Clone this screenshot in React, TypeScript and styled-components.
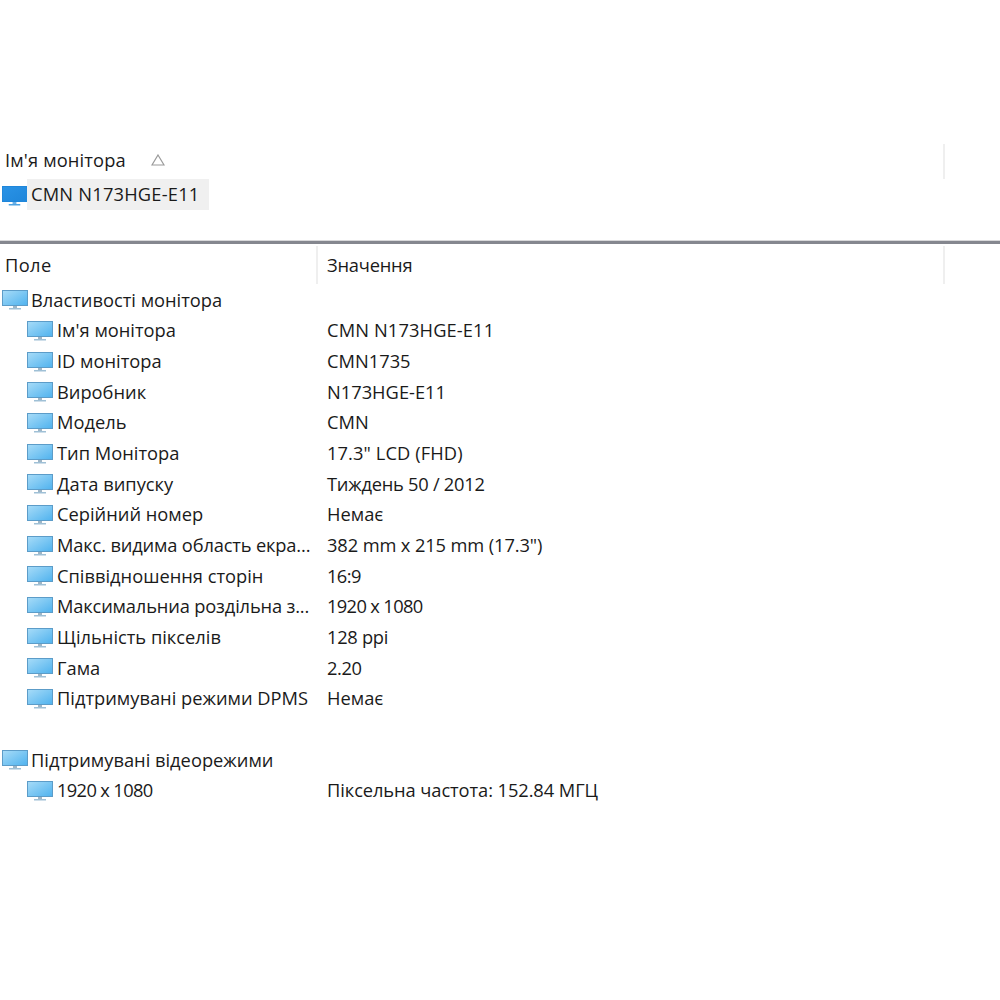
import React from "react";
import styled, { createGlobalStyle } from "styled-components";

const Global = createGlobalStyle`
  html, body { margin: 0; padding: 0; background: #fff; }
  body { font-family: "Open Sans", "Noto Sans", "Liberation Sans", sans-serif; color: #1a1a1a; font-size: 18.3px; }
`;

const Page = styled.div`
  width: 1000px;
  height: 1000px;
  box-sizing: border-box;
  padding-top: 144px;
  overflow: hidden;
`;

const HeaderBar = styled.div`
  display: grid;
  grid-template-columns: 945px 1fr;
  height: 35px;
`;

const HeaderCell = styled.div`
  display: flex;
  align-items: center;
  gap: 25px;
  padding-left: 5px;
  border-right: 2px solid #efefef;
  line-height: 30px;
  height: 35px;
`;

const HeaderTitle = styled.span`
  letter-spacing: 0.15px;
  margin-top: -4px;
`;

const SortArrow = styled.svg`
  margin-top: -4px;
`;

const TopRow = styled.div`
  display: flex;
  align-items: center;
  height: 31px;
  padding-left: 2px;
`;

const Selected = styled.div`
  background: #f0f0f0;
  height: 31px;
  line-height: 30px;
  letter-spacing: 0.2px;
  padding: 0 10px 0 4px;
`;

const Splitter = styled.div`
  margin-top: 30px;
  height: 4px;
  background: #85878f;
  border-top: 1px solid #d8d8da;
  box-sizing: border-box;
`;

const ColumnHeader = styled.div`
  display: grid;
  grid-template-columns: 318px 627px;
  height: 38px;
  margin-top: 2px;
  align-items: center;
`;

const ColumnLabel = styled.div<{ $first?: boolean }>`
  height: 38px;
  line-height: 37px;
  box-sizing: border-box;
  padding-left: ${(p) => (p.$first ? "5px" : "9px")};
  letter-spacing: ${(p) => (p.$first ? "0.4px" : "-0.2px")};
  border-right: 2px solid #efefef;
`;

const List = styled.div`
  display: grid;
  grid-auto-rows: 30.67px;
`;

const Row = styled.div`
  display: grid;
  grid-template-columns: 327px 1fr;
  align-items: center;
  white-space: nowrap;
`;

const Name = styled.div<{ $child?: boolean }>`
  display: flex;
  align-items: center;
  gap: ${(p) => (p.$child ? "4px" : "3px")};
  padding-left: ${(p) => (p.$child ? "27px" : "2px")};
`;

const Label = styled.span<{ $track?: number }>`
  letter-spacing: ${(p) => p.$track ?? 0}px;
`;

const MonitorSvg = styled.svg<{ $dark?: boolean }>`
  flex: none;
  margin-top: ${(p) => (p.$dark ? "3px" : "2px")};
`;

const Monitor = ({ dark }: { dark?: boolean }) => (
  <MonitorSvg $dark={dark} width={dark ? 25 : 26} height="20" viewBox="0 0 26 20" preserveAspectRatio="none">
    <defs>
      <linearGradient id={dark ? "sd" : "sl"} x1="0" y1="0" x2="1" y2="1">
        <stop offset="0" stopColor={dark ? "#2a93e6" : "#a8dcf8"} />
        <stop offset="1" stopColor={dark ? "#1f86da" : "#4fb2ee"} />
      </linearGradient>
    </defs>
    <rect x="0.5" y="0.5" width="25" height="15" fill={`url(#${dark ? "sd" : "sl"})`} stroke={dark ? "#1f86da" : "#5c9cc8"} />
    <rect x="11" y="16" width="4" height="2" fill={dark ? "#6ab0e6" : "#9fb6c6"} />
    <rect x="7" y="18" width="12" height="1.5" fill={dark ? "#4ea3e2" : "#9fc0d6"} />
  </MonitorSvg>
);

type Item = { name: string; value?: string; child?: boolean; nameTrack?: number; valueTrack?: number } | null;

const items: Item[] = [
  { name: "Властивості монітора" },
  { name: "Ім'я монітора", value: "CMN N173HGE-E11", child: true, valueTrack: 0.12 },
  { name: "ID монітора", value: "CMN1735", child: true },
  { name: "Виробник", value: "N173HGE-E11", child: true },
  { name: "Модель", value: "CMN", child: true },
  { name: "Тип Монітора", value: '17.3" LCD (FHD)', child: true, valueTrack: 0.1 },
  { name: "Дата випуску", value: "Тиждень 50 / 2012", child: true, valueTrack: -0.25 },
  { name: "Серійний номер", value: "Немає", child: true },
  { name: "Макс. видима область екра...", value: "382 mm x 215 mm (17.3\")", child: true, nameTrack: -0.16, valueTrack: -0.12 },
  { name: "Співвідношення сторін", value: "16:9", child: true, valueTrack: -0.6 },
  { name: "Максимальниа роздільна з...", value: "1920 x 1080", child: true, nameTrack: -0.16, valueTrack: -0.65 },
  { name: "Щільність пікселів", value: "128 ppi", child: true, valueTrack: -0.3 },
  { name: "Гама", value: "2.20", child: true, valueTrack: -0.4 },
  { name: "Підтримувані режими DPMS", value: "Немає", child: true },
  null,
  { name: "Підтримувані відеорежими" },
  { name: "1920 x 1080", value: "Піксельна частота: 152.84 МГЦ", child: true, nameTrack: -0.65, valueTrack: -0.08 },
];

export default function App() {
  return (
    <Page>
      <Global />
      <HeaderBar>
        <HeaderCell>
          <HeaderTitle>Ім'я монітора</HeaderTitle>
          <SortArrow width="14" height="12" viewBox="0 0 14 12">
            <path d="M7 1 L13 11 H1 Z" fill="none" stroke="#9a9a9a" strokeWidth="1.2" />
          </SortArrow>
        </HeaderCell>
      </HeaderBar>
      <TopRow>
        <Monitor dark />
        <Selected>CMN N173HGE-E11</Selected>
      </TopRow>
      <Splitter />
      <ColumnHeader>
        <ColumnLabel $first>Поле</ColumnLabel>
        <ColumnLabel>Значення</ColumnLabel>
      </ColumnHeader>
      <List>
        {items.map((it, i) =>
          it ? (
            <Row key={i}>
              <Name $child={it.child}>
                <Monitor />
                <Label $track={it.nameTrack}>{it.name}</Label>
              </Name>
              <Label $track={it.valueTrack}>{it.value}</Label>
            </Row>
          ) : (
            <Row key={i} />
          )
        )}
      </List>
    </Page>
  );
}
